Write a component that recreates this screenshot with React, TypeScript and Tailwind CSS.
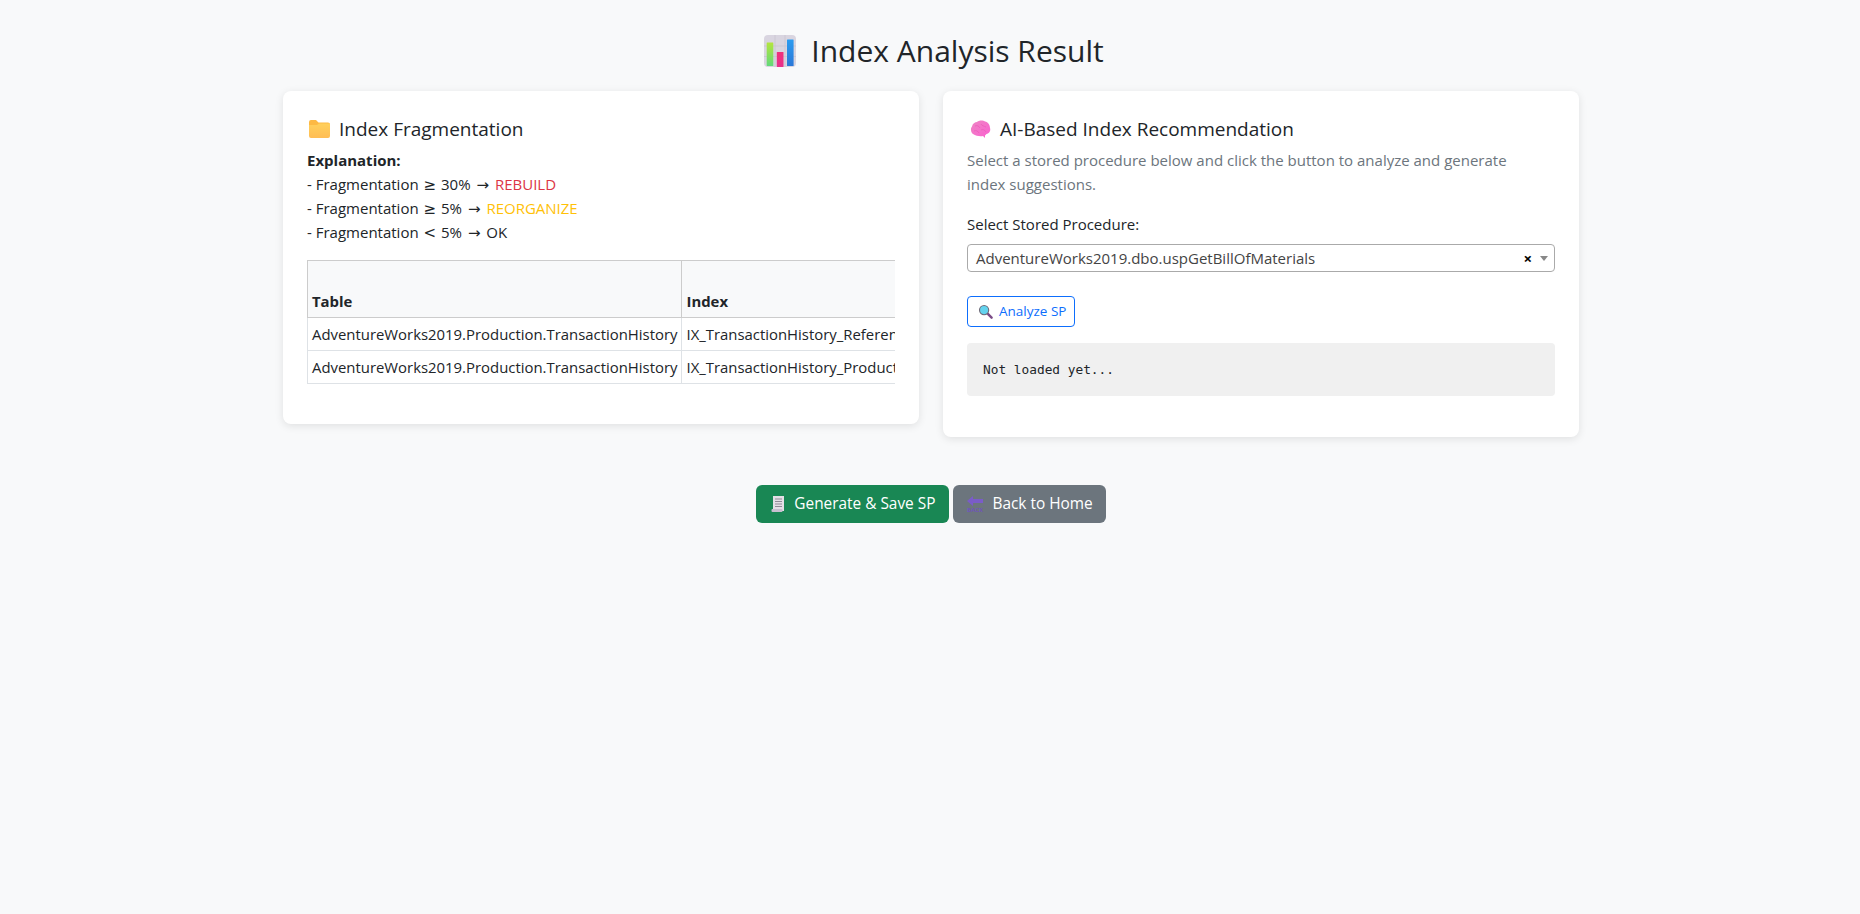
const font = 'font-["Open_Sans",sans-serif]';
const sym = "font-['DejaVu_Sans',sans-serif] text-[15px] leading-none mx-px";
const arrow = "font-['DejaVu_Sans',sans-serif] text-[15px] leading-none mx-[2px]";

function ChartIcon() {
  return (
    <svg viewBox="0 0 32 32" className="w-8 h-8 shrink-0">
      <defs>
        <linearGradient id="chartGreen" x1="0" y1="0" x2="0" y2="1">
          <stop offset="0" stopColor="#b4e53e" />
          <stop offset="1" stopColor="#62d97a" />
        </linearGradient>
        <linearGradient id="chartPink" x1="0" y1="0" x2="0" y2="1">
          <stop offset="0" stopColor="#f0307a" />
          <stop offset="1" stopColor="#e8308c" />
        </linearGradient>
        <linearGradient id="chartBlue" x1="0" y1="0" x2="0" y2="1">
          <stop offset="0" stopColor="#2c9cf0" />
          <stop offset="1" stopColor="#2a78d8" />
        </linearGradient>
      </defs>
      <rect width="32" height="32" rx="4" fill="#d9d5e0" />
      <path d="M0 11h32M0 21.500h32M11 0v32M21 0v32" stroke="#c9c5d0" strokeWidth="0.8" />
      <rect x="2.700" y="7.500" width="6.600" height="23.500" rx="0.5" fill="url(#chartGreen)" />
      <rect x="12.800" y="17" width="6.700" height="15" rx="0.5" fill="url(#chartPink)" />
      <rect x="23" y="4.500" width="6.600" height="26.500" rx="0.5" fill="url(#chartBlue)" />
    </svg>
  );
}

function FolderIcon() {
  return (
    <svg viewBox="0 0 21 18" className="w-[21px] h-[18px] shrink-0">
      <defs>
        <linearGradient id="folderFront" x1="0" y1="0" x2="0" y2="1">
          <stop offset="0" stopColor="#ffd05c" />
          <stop offset="1" stopColor="#ffbd55" />
        </linearGradient>
      </defs>
      <path d="M0 2A2 2 0 0 1 2 0h5l2.500 2.500H19a2 2 0 0 1 2 2V8H0z" fill="#fdb944" />
      <path d="M0 5h8l2-1.500h11V16a2 2 0 0 1-2 2H2a2 2 0 0 1-2-2z" fill="url(#folderFront)" />
    </svg>
  );
}

function BrainIcon() {
  return (
    <svg viewBox="0 0 21 19" className="w-[21px] h-[19px] shrink-0">
      <defs>
        <linearGradient id="brainFill" x1="0" y1="0" x2="1" y2="1">
          <stop offset="0" stopColor="#ee86c4" />
          <stop offset="1" stopColor="#fb5fd0" />
        </linearGradient>
      </defs>
      <path d="M3 14C.5 12 .5 8 2 6.500 2.500 3.500 5 2 7 2c2-2 6-2 8-.5 3 .5 5 3.500 5 6.500 1 3-1 5.500-3.500 6L15 15.500V18l-2-2c-3 .5-7 0-10-2z" fill="url(#brainFill)" />
      <path d="M5 6c2-1 4 0 5 2M11 4c1 2 3 2 5 3M4 11c2-1 4 0 5 2M11 10c2-1 4 0 5 2" stroke="#ea5ab8" strokeWidth="0.7" fill="none" />
    </svg>
  );
}

function SearchIcon() {
  return (
    <svg viewBox="0 0 16 16" className="w-[15px] h-[15px] shrink-0">
      <path d="M10 10l4.500 4.500" stroke="#7a4a86" strokeWidth="2.600" strokeLinecap="round" />
      <circle cx="6.500" cy="6.500" r="5.500" fill="#6d6a78" />
      <circle cx="6.500" cy="6.500" r="4.300" fill="#63d3ee" />
    </svg>
  );
}

function ScrollIcon() {
  return (
    <svg viewBox="0 0 16 18" className="w-4 h-[18px] shrink-0">
      <rect x="3" y="1" width="11" height="15" fill="#e4dfe6" />
      <rect x="1.500" y="14" width="11" height="3" rx="1" fill="#c8bfd0" />
      <path d="M5 4h7M5 6.500h7M5 9h7M5 11.500h7" stroke="#8f8a96" strokeWidth="1" />
    </svg>
  );
}

function BackIcon() {
  return (
    <svg viewBox="0 0 18 18" className="w-[18px] h-[18px] shrink-0">
      <path d="M1 6l6-5v3h10v4H7v3z" fill="#7a5cc8" />
      <text x="9" y="17" textAnchor="middle" fontSize="6" fontWeight="700" fill="#6f55ba">BACK</text>
    </svg>
  );
}

export default function App() {
  return (
    <div className={`min-h-screen bg-[#f8f9fa] text-[#212529] ${font}`}>
      <div className="w-[1320px] mx-auto pt-8 pl-[13px] pr-[11px]">
        <h2 className="flex items-center justify-center gap-[15px] text-[30px] leading-[38px] mb-[21px] pl-[6px]">
          <ChartIcon />
          <span>Index Analysis Result</span>
        </h2>

        <div className="grid grid-cols-2 gap-6 items-start">
          <div className="bg-white rounded-lg shadow-[0_2px_8px_rgba(0,0,0,0.1)] p-6">
            <h5 className="flex items-center gap-[9px] text-[19px] leading-6 mt-0.5 mb-[7px] pl-0.5">
              <FolderIcon />
              <span>Index Fragmentation</span>
            </h5>
            <p className="text-[15px] leading-6 mb-[16px]">
              <strong>Explanation:</strong>
              <br />- Fragmentation <span className={sym}>≥</span> 30% <span className={arrow}>→</span> <span className="text-[#dc3545]">REBUILD</span>
              <br />- Fragmentation <span className={sym}>≥</span> 5% <span className={arrow}>→</span> <span className="text-[#ffc107]">REORGANIZE</span>
              <br />- Fragmentation <span className={sym}>&lt;</span> 5% <span className={arrow}>→</span> OK
            </p>
            <div className="overflow-hidden">
              <table className="border-collapse whitespace-nowrap text-[14.9px] leading-6">
                <thead>
                  <tr className="bg-[#f8f9fa]">
                    <th className="h-[57px] align-bottom text-left font-bold border border-[#ccc] px-1 py-1">Table</th>
                    <th className="h-[57px] align-bottom text-left font-bold border border-[#ccc] px-1 py-1">Index</th>
                  </tr>
                </thead>
                <tbody>
                  <tr>
                    <td className="border border-[#dee2e6] px-1 py-1">AdventureWorks2019.Production.TransactionHistory</td>
                    <td className="border border-[#dee2e6] px-1 py-1">IX_TransactionHistory_ReferenceOrderID_ReferenceOrderLineID</td>
                  </tr>
                  <tr>
                    <td className="border border-[#dee2e6] px-1 py-1">AdventureWorks2019.Production.TransactionHistory</td>
                    <td className="border border-[#dee2e6] px-1 py-1">IX_TransactionHistory_ProductID</td>
                  </tr>
                </tbody>
              </table>
            </div>
            <div className="h-4" />
          </div>

          <div className="bg-white rounded-lg shadow-[0_2px_8px_rgba(0,0,0,0.1)] p-6">
            <h5 className="flex items-center gap-[9px] text-[19px] leading-6 mt-0.5 mb-[7px] pl-[3px]">
              <BrainIcon />
              <span>AI-Based Index Recommendation</span>
            </h5>
            <p className="text-[15px] leading-6 text-[#6c757d] mb-4 pr-8">
              Select a stored procedure below and click the button to analyze and generate index suggestions.
            </p>
            <label className="block text-[15px] leading-6 mb-2">Select Stored Procedure:</label>
            <div className="flex items-center h-7 border border-[#aaa] rounded pl-2 pr-1.5 mb-6">
              <span className="flex-1 text-[15px] text-[#444] pt-px">AdventureWorks2019.dbo.uspGetBillOfMaterials</span>
              <span className="font-bold text-black text-[15px] mr-2">×</span>
              <span className="w-0 h-0 border-x-4 border-x-transparent border-t-[5px] border-t-[#888]" />
            </div>
            <button className="flex items-center gap-[6px] h-[31px] pl-2.5 pr-2 border border-[#0d6efd] rounded text-[13.5px] text-[#0d6efd] mb-4">
              <SearchIcon />
              <span>Analyze SP</span>
            </button>
            <pre className="bg-[#f0f0f0] rounded px-4 py-4 text-[12.8px] leading-[21px] font-['DejaVu_Sans_Mono',monospace]">Not loaded yet...</pre>
            <div className="h-[17px]" />
          </div>
        </div>

        <div className="flex justify-center gap-1 mt-12">
          <button className="flex items-center gap-2 h-[38px] px-[14px] rounded-md bg-[#198754] text-white text-[15.4px]">
            <ScrollIcon />
            <span>Generate &amp; Save SP</span>
          </button>
          <button className="flex items-center gap-2 h-[38px] px-[13px] rounded-md bg-[#6c757d] text-white text-[15.4px]">
            <BackIcon />
            <span>Back to Home</span>
          </button>
        </div>
      </div>
    </div>
  );
}
